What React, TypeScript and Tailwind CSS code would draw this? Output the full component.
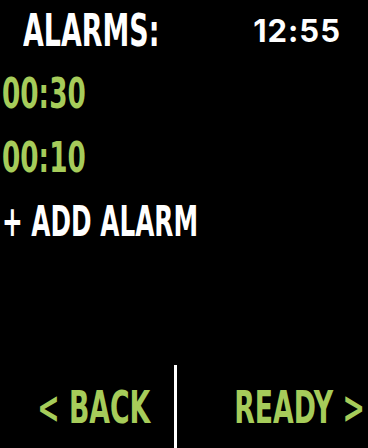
const condensed = { fontFamily: '"DejaVu Sans Condensed", "DejaVu Sans", "Liberation Sans", sans-serif' };

export default function App() {
  return (
    <div className="w-[368px] h-[448px] bg-black flex flex-col overflow-hidden select-none">
      {/* header */}
      <div className="flex items-start justify-between h-[71px]">
        <h1
          className="ml-[23px] mt-[9px] text-[44px] leading-[44px] font-bold text-white whitespace-nowrap origin-left scale-x-[0.68]"
          style={condensed}
        >
          ALARMS:
        </h1>
        <span className="mr-[27px] mt-[14px] text-[31px] leading-[34px] font-bold tracking-[1px] text-white font-['Inter',sans-serif]">
          12:55
        </span>
      </div>

      {/* alarm list */}
      <ul className="flex flex-col gap-[20px] pl-[2px] text-[#a6cc5a]" style={condensed}>
        <li className="text-[43px] leading-[44px] font-bold whitespace-nowrap origin-left scale-x-[0.68]">00:30</li>
        <li className="text-[43px] leading-[44px] font-bold whitespace-nowrap origin-left scale-x-[0.68]">00:10</li>
        <li className="text-[43px] leading-[44px] font-bold text-white whitespace-nowrap origin-left scale-x-[0.64]">+ ADD ALARM</li>
      </ul>

      {/* bottom bar */}
      <div className="mt-auto flex h-[83px]">
        <div
          className="w-[174px] shrink-0 flex items-center justify-end pr-[24px] pt-[2px] text-[45px] font-bold text-[#a6cc5a]"
          style={condensed}
        >
          <span className="whitespace-nowrap origin-right scale-x-[0.66]">&lt; BACK</span>
        </div>
        <div className="w-[3px] shrink-0 bg-white" />
        <div
          className="flex-1 min-w-0 flex items-center justify-end pr-[3px] pt-[2px] text-[45px] font-bold text-[#a6cc5a]"
          style={condensed}
        >
          <span className="whitespace-nowrap origin-right scale-x-[0.66]">READY &gt;</span>
        </div>
      </div>
    </div>
  );
}
